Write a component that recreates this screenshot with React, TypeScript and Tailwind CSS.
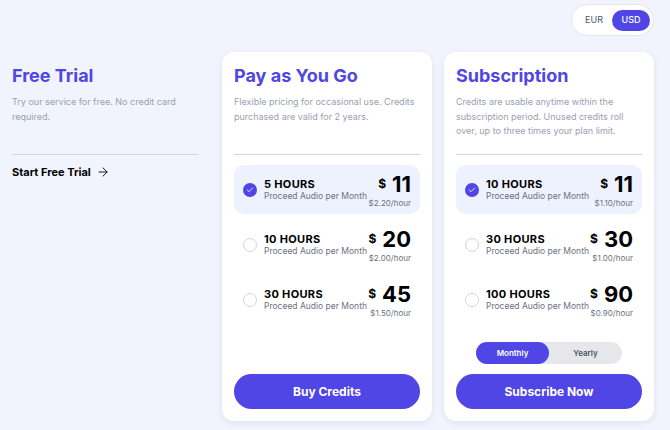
import React from 'react';
import { ArrowRight, Check } from 'lucide-react';

type Plan = {
  hours: string;
  price: string;
  rate: string;
  selected?: boolean;
};

const payPlans: Plan[] = [
  { hours: '5 HOURS', price: '11', rate: '$2.20/hour', selected: true },
  { hours: '10 HOURS', price: '20', rate: '$2.00/hour' },
  { hours: '30 HOURS', price: '45', rate: '$1.50/hour' },
];

const subPlans: Plan[] = [
  { hours: '10 HOURS', price: '11', rate: '$1.10/hour', selected: true },
  { hours: '30 HOURS', price: '30', rate: '$1.00/hour' },
  { hours: '100 HOURS', price: '90', rate: '$0.90/hour' },
];

const PlanRow = ({ plan }: { plan: Plan }) => (
  <div
    className={`flex h-[49px] items-center rounded-[10px] px-[9px] ${plan.selected ? 'bg-[#eef1fe]' : ''}`}
  >
    {plan.selected ? (
      <div className="flex h-[14px] w-[14px] items-center justify-center rounded-full bg-[#4f46e5]">
        <Check size={8} strokeWidth={2.5} className="text-white" />
      </div>
    ) : (
      <div className="h-[14px] w-[14px] rounded-full border border-gray-300 bg-white" />
    )}
    <div className="ml-[7px] flex flex-col">
      <span className="text-[11px] font-bold leading-[13px] tracking-[0.03em] text-black">{plan.hours}</span>
      <span className="text-[8.5px] leading-[11px] text-gray-500">Proceed Audio per Month</span>
    </div>
    <div className="ml-auto flex flex-col items-end">
      <div className="flex items-center gap-[6px]">
        <span className="text-[12px] font-bold text-black">$</span>
        <span className="text-[22px] font-bold leading-[24px] text-black">{plan.price}</span>
      </div>
      <span className="mt-[2px] text-[8px] leading-[10px] text-gray-500">{plan.rate}</span>
    </div>
  </div>
);

const Header = ({ title, desc }: { title: string; desc: string }) => (
  <>
    <h2 className="text-lg font-bold leading-6 text-[#4f46e5]">{title}</h2>
    <p className="mt-[7px] h-[43px] text-[9px] leading-[14.5px] text-gray-400">{desc}</p>
    <div className="mt-4 border-t border-gray-300" />
  </>
);

export default function App() {
  return (
    <div className="h-[430px] w-[670px] overflow-hidden bg-[#f1f4fd] font-['Inter',sans-serif]">
      <div className="w-[654px] pt-1">
        <div className="flex justify-end">
          <div className="flex h-[32px] items-center rounded-full border border-gray-200 bg-white pl-[4px] pr-[3px]">
            <button className="h-[21px] w-[36px] text-[9px] text-gray-600">EUR</button>
            <button className="h-[21px] w-[38px] rounded-full bg-[#4f46e5] text-[9px] font-medium text-white">USD</button>
          </div>
        </div>

        <div className="mt-4 grid grid-cols-3 gap-3">
          <div className="px-3 pt-3">
            <Header title="Free Trial" desc="Try our service for free. No credit card required." />
            <a className="mt-[10px] flex items-center gap-[5px] text-[11px] font-bold leading-[14px] text-black">
              Start Free Trial
              <ArrowRight size={14} strokeWidth={1.5} />
            </a>
          </div>

          <div className="flex flex-col rounded-xl bg-white p-3 shadow-[0_2px_6px_rgba(30,41,99,0.08)]">
            <Header
              title="Pay as You Go"
              desc="Flexible pricing for occasional use. Credits purchased are valid for 2 years."
            />
            <div className="mt-[10px] flex flex-col gap-[6px]">
              {payPlans.map((p) => (
                <PlanRow key={p.hours} plan={p} />
              ))}
            </div>
            <button className="mt-auto h-[35px] rounded-full bg-[#4f46e5] text-[12px] font-bold text-white">
              Buy Credits
            </button>
          </div>

          <div className="flex flex-col rounded-xl bg-white p-3 shadow-[0_2px_6px_rgba(30,41,99,0.08)]">
            <Header
              title="Subscription"
              desc="Credits are usable anytime within the subscription period. Unused credits roll over, up to three times your plan limit."
            />
            <div className="mt-[10px] flex flex-col gap-[6px]">
              {subPlans.map((p) => (
                <PlanRow key={p.hours} plan={p} />
              ))}
            </div>
            <div className="mx-auto mt-[18px] flex h-[22px] w-[146px] rounded-full bg-gray-200">
              <button className="w-[73px] rounded-full bg-[#4f46e5] text-[8px] font-semibold text-white">Monthly</button>
              <button className="flex-1 text-[8px] font-semibold text-gray-600">Yearly</button>
            </div>
            <button className="mt-[10px] h-[35px] rounded-full bg-[#4f46e5] text-[12px] font-bold text-white">
              Subscribe Now
            </button>
          </div>
        </div>
      </div>
    </div>
  );
}
